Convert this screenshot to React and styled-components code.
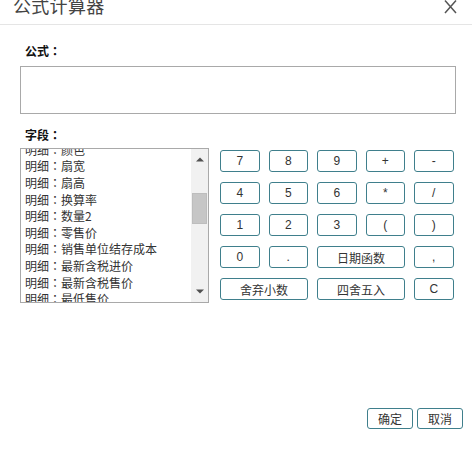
import React, { useLayoutEffect, useRef } from "react";
import styled, { createGlobalStyle } from "styled-components";

const GlobalStyle = createGlobalStyle`
  html, body {
    margin: 0;
    padding: 0;
    background: #fff;
  }
  body {
    font-family: "Liberation Sans", "Noto Sans CJK SC", sans-serif;
    color: #333;
  }
`;

const fields = [
  "商品编号", "商品名称", "规格", "型号", "单位", "数量", "单价", "金额",
  "颜色", "扇宽", "扇高", "换算率", "数量2", "零售价", "销售单位结存成本",
  "最新含税进价", "最新含税售价", "最低售价", "批发价", "会员价", "折扣",
  "税率", "税额", "含税单价", "含税金额", "备注", "条码", "产地", "品牌",
  "仓库", "批号", "生产日期", "有效期", "重量", "体积", "件数",
];

const keys = [
  ["7"], ["8"], ["9"], ["+"], ["-"],
  ["4"], ["5"], ["6"], ["*"], ["/"],
  ["1"], ["2"], ["3"], ["("], [")"],
  ["0"], ["."], ["日期函数", 2], [","],
  ["舍弃小数", 2], ["四舍五入", 2], ["C"],
];

const App = () => {
  const listRef = useRef(null);

  useLayoutEffect(() => {
    if (listRef.current) listRef.current.scrollTop = 140;
  }, []);

  return (
    <Dialog>
      <GlobalStyle />
      <Header>
        <Title>公式计算器</Title>
        <Close aria-label="close">
          <svg width="13" height="14" viewBox="0 0 13 14">
            <path d="M1 0.5 L12 13 M12 0.5 L1 13" stroke="#555" strokeWidth="1.5" fill="none" />
          </svg>
        </Close>
      </Header>

      <Body>
        <Label>
          公式<Colon>：</Colon>
        </Label>
        <Formula />

        <Label $top={13}>
          字段<Colon>：</Colon>
        </Label>
        <Row>
          <ListBox>
            <ListView ref={listRef}>
              {fields.map((f) => (
                <Item key={f}>
                  明细<Colon>：</Colon>
                  {f}
                </Item>
              ))}
            </ListView>
            <ScrollBar>
              <Arrow>
                <svg width="8" height="5" viewBox="0 0 8 5">
                  <path d="M0 4.5 L4 0.5 L8 4.5 Z" fill="#505050" />
                </svg>
              </Arrow>
              <Track>
                <Thumb />
              </Track>
              <Arrow>
                <svg width="8" height="5" viewBox="0 0 8 5">
                  <path d="M0 0.5 L4 4.5 L8 0.5 Z" fill="#505050" />
                </svg>
              </Arrow>
            </ScrollBar>
          </ListBox>

          <Keypad>
            {keys.map(([k, span]) => (
              <Key key={k} $span={span}>
                {k}
              </Key>
            ))}
          </Keypad>
        </Row>
      </Body>

      <Footer>
        <FootButton>确定</FootButton>
        <FootButton>取消</FootButton>
      </Footer>
    </Dialog>
  );
};

const Dialog = styled.div`
  display: flex;
  flex-direction: column;
  width: 472px;
  height: 459px;
  background: #fff;
`;

const Header = styled.div`
  display: flex;
  justify-content: space-between;
  height: 24px;
  padding: 0 15px 0 13px;
  border-bottom: 1px solid #e5e5e5;
  overflow: hidden;
`;

const Title = styled.div`
  align-self: flex-end;
  margin-bottom: 10px;
  font-family: "Noto Sans CJK SC", sans-serif;
  font-size: 18px;
  line-height: 18px;
  color: #444;
  letter-spacing: 0.3px;
`;

const Close = styled.div`
  align-self: flex-start;
  display: flex;
  line-height: 0;
`;

const Body = styled.div`
  display: flex;
  flex-direction: column;
  padding: 0 16px 0 20px;
`;

const Label = styled.div`
  margin-top: ${(p) => p.$top ?? 18}px;
  padding-left: 5px;
  font-family: "Noto Sans CJK SC", sans-serif;
  font-size: 12px;
  line-height: 16px;
  font-weight: bold;
  color: #111;
`;

const Colon = styled.span`
  font-family: "Noto Sans CJK TC", sans-serif;
`;

const Formula = styled.div`
  margin-top: 7px;
  height: 46px;
  border: 1px solid #a9a9a9;
`;

const Row = styled.div`
  display: flex;
  align-items: flex-start;
  gap: 11px;
  margin-top: 5px;
`;

const ListBox = styled.div`
  display: flex;
  width: 187px;
  height: 153px;
  border: 1px solid #a9a9a9;
`;

const ListView = styled.div`
  flex: 1;
  overflow: hidden;
`;

const Item = styled.div`
  padding-left: 4px;
  font-family: "Noto Sans CJK SC", sans-serif;
  font-size: 12px;
  line-height: 16.6px;
  color: #333;
  white-space: nowrap;
`;

const ScrollBar = styled.div`
  display: flex;
  flex-direction: column;
  width: 17px;
  background: #f1f1f1;
`;

const Arrow = styled.div`
  display: flex;
  align-items: center;
  justify-content: center;
  height: 21px;
`;

const Track = styled.div`
  flex: 1;
  display: flex;
  flex-direction: column;
  padding: 23px 1px 0 1px;
`;

const Thumb = styled.div`
  height: 31px;
  background: #c6c6c6;
  border: 1px solid #bdbdbd;
  box-sizing: border-box;
`;

const Keypad = styled.div`
  display: grid;
  grid-template-columns: repeat(5, 39.5px);
  grid-auto-rows: 22px;
  column-gap: 9px;
  row-gap: 10px;
  margin-top: 2px;
`;

const Key = styled.button`
  grid-column: span ${(p) => p.$span ?? 1};
  margin: 0;
  padding: 0;
  background: #fff;
  border: 1px solid #3f7f8c;
  border-radius: 3px;
  font-family: "Liberation Sans", "Noto Sans CJK SC", sans-serif;
  font-size: 12px;
  color: #333;
`;

const Footer = styled.div`
  display: flex;
  justify-content: flex-end;
  gap: 4px;
  margin-top: auto;
  padding: 0 9px 30px 0;
`;

const FootButton = styled.button`
  width: 46px;
  height: 21px;
  margin: 0;
  padding: 0;
  background: #fff;
  border: 1px solid #3f7f8c;
  border-radius: 3px;
  font-family: "Noto Sans CJK SC", sans-serif;
  font-size: 12px;
  color: #333;
`;

export default App;
